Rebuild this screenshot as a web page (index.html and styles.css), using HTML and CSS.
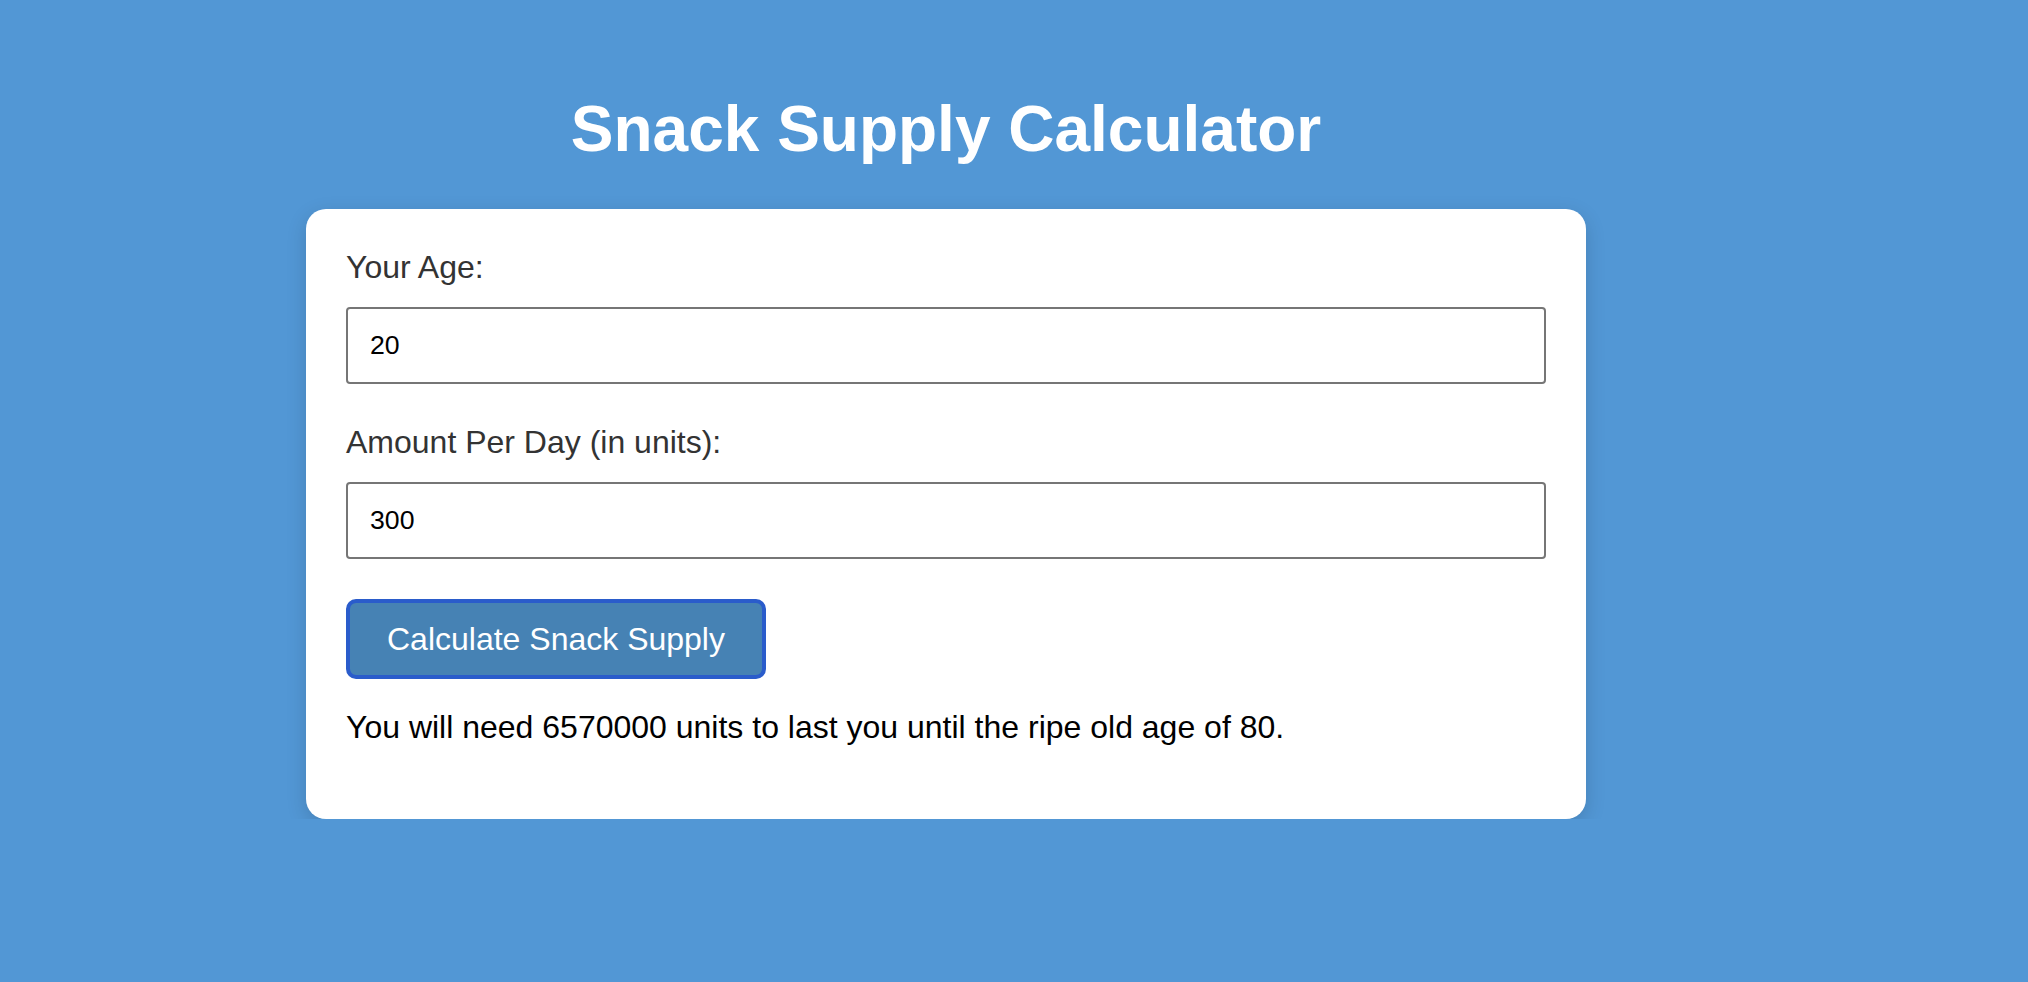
FILE: index.html
```html
<!DOCTYPE html>
<html lang="en">
<head>
<meta charset="utf-8">
<title>Snack Supply Calculator</title>
<link rel="stylesheet" href="styles.css">
</head>
<body>
<div class="page">
  <h1 class="title">Snack Supply Calculator</h1>
  <div class="card">
    <label class="label" for="age">Your Age:</label>
    <input class="field" id="age" type="text" value="20">
    <label class="label" for="amount">Amount Per Day (in units):</label>
    <input class="field" id="amount" type="text" value="300">
    <button class="btn" type="button">Calculate Snack Supply</button>
    <p class="result">You will need 6570000 units to last you until the ripe old age of 80.</p>
  </div>
</div>
</body>
</html>
```
FILE: styles.css
```css
html, body {
  margin: 0;
  padding: 0;
  background: #5297d5;
  font-family: "Liberation Sans", Arial, sans-serif;
}
.page {
  width: 1892px;
  display: flex;
  flex-direction: column;
  align-items: center;
  padding-top: 92px;
}
.title {
  margin: 0 0 43px;
  font-size: 64px;
  line-height: 74px;
  font-weight: bold;
  color: #ffffff;
}
.card {
  box-sizing: border-box;
  width: 1280px;
  background: #ffffff;
  border-radius: 20px;
  padding: 40px 40px 40px;
  box-shadow: 0 6px 20px rgba(0, 0, 0, 0.15);
  display: flex;
  flex-direction: column;
  align-items: flex-start;
}
.label {
  display: block;
  font-size: 32px;
  line-height: 37px;
  color: #333333;
  margin-bottom: 21px;
}
.field {
  box-sizing: border-box;
  width: 100%;
  height: 77px;
  padding: 0 22px;
  border: 2px solid #767676;
  border-radius: 4px;
  font-family: "Liberation Sans", Arial, sans-serif;
  font-size: 26.67px;
  color: #000000;
  background: #ffffff;
  margin: 0 0 40px;
}
.btn {
  box-sizing: border-box;
  height: 80px;
  padding: 0 37px;
  background: #4682b4;
  border: 4px solid #2a5ccb;
  border-radius: 10px;
  color: #ffffff;
  font-family: "Liberation Sans", Arial, sans-serif;
  font-size: 32px;
  line-height: 37px;
  cursor: pointer;
}
.result {
  margin: 30px 0 33px;
  font-size: 32px;
  line-height: 37px;
  color: #000000;
}
```
